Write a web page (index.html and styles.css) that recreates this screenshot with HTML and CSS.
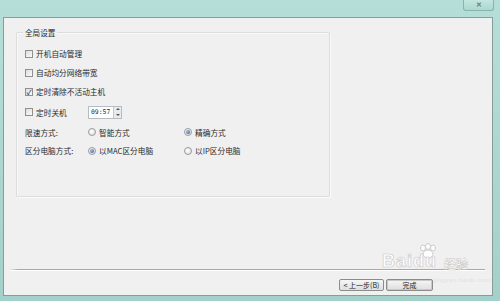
FILE: index.html
```html
<!DOCTYPE html>
<html lang="zh-CN">
<head>
    <meta charset="UTF-8">
    <title>全局设置</title>
    <link rel="stylesheet" href="styles.css">
</head>
<body>
    <div class="window">
        <div class="titlebar">
            <div class="close">&#x2715;</div>
        </div>
        <div class="panel">
            <div class="group">
                <div class="group-title">全局设置</div>
                <div class="rows">
                    <div class="row">
                        <label class="check"><span class="box"></span>开机自动管理</label>
                    </div>
                    <div class="row">
                        <label class="check"><span class="box"></span>自动均分网络带宽</label>
                    </div>
                    <div class="row">
                        <label class="check"><span class="box checked">&#x2713;</span>定时清除不活动主机</label>
                    </div>
                    <div class="row row-time">
                        <label class="check"><span class="box"></span>定时关机</label>
                        <div class="time">
                            <span class="time-text">09:57</span>
                            <span class="spin"><i class="up"></i><i class="down"></i></span>
                        </div>
                    </div>
                    <div class="row row-short">
                        <span class="label">限速方式:</span>
                        <label class="radio"><span class="dot"></span>智能方式</label>
                        <label class="radio"><span class="dot on"></span>精确方式</label>
                    </div>
                    <div class="row">
                        <span class="label">区分电脑方式:</span>
                        <label class="radio"><span class="dot on"></span>以MAC区分电脑</label>
                        <label class="radio"><span class="dot"></span>以IP区分电脑</label>
                    </div>
                </div>
            </div>
            <div class="spacer"></div>
            <div class="separator"></div>
            <div class="actions">
                <button class="btn btn-back">&lt; 上一步(B)</button>
                <button class="btn btn-done">完成</button>
            </div>
        </div>
    </div>
    <div class="watermark">
        <svg class="paw" width="26" height="16" viewBox="0 0 26 16">
            <ellipse cx="8" cy="5" rx="2.5" ry="3" fill="#fff" stroke="#c8c8c8"/>
            <ellipse cx="13" cy="3.5" rx="2.5" ry="3" fill="#fff" stroke="#c8c8c8"/>
            <ellipse cx="18" cy="5" rx="2.5" ry="3" fill="#fff" stroke="#c8c8c8"/>
            <ellipse cx="13" cy="11" rx="5" ry="4" fill="#fff" stroke="#c8c8c8"/>
        </svg>
        <span class="wm-text">Baidu</span><span class="wm-cn">经验</span>
        <div class="wm-url">jingyan.baidu.com</div>
    </div>
</body>
</html>
```

FILE: styles.css
```css
body {
    margin: 0;
    width: 500px;
    height: 301px;
    overflow: hidden;
    background: linear-gradient(to bottom, #b6ded8, #a3d1c9);
    font-family: "Noto Sans CJK SC", "Liberation Sans", sans-serif;
    color: #2a2a2a;
    position: relative;
}
.window {
    display: flex;
    flex-direction: column;
    height: 301px;
}
.titlebar {
    height: 17px;
    display: flex;
    justify-content: flex-end;
    padding-right: 6px;
}
.close {
    width: 29px;
    height: 10px;
    border: 1px solid #86b3ad;
    border-top: none;
    border-radius: 0 0 3px 3px;
    background: linear-gradient(to bottom, #c3e6e0, #acd8d0);
    color: #6f7f7d;
    font-size: 7px;
    line-height: 9px;
    text-align: center;
    font-weight: bold;
}
.panel {
    flex: 1;
    margin: 0 7px 5px 3px;
    border: 1px solid #8a9c99;
    background: #f0f0f0;
    display: flex;
    flex-direction: column;
}
.group {
    margin: 14px 0 0 12px;
    width: 312px;
    height: 163px;
    border: 1px solid #dcdcdc;
    box-shadow: inset 1px 1px 0 #fafafa, 1px 1px 0 #fafafa;
    border-radius: 2px;
}
.group-title {
    margin: -5px 0 0 6px;
    padding: 0 2px;
    width: fit-content;
    background: #f0f0f0;
    font-size: 7.6px;
    line-height: 10px;
}
.rows {
    padding: 6px 0 0 8px;
}
.row {
    height: 19px;
    display: grid;
    grid-template-columns: 63px 96px auto;
    align-items: center;
    font-size: 7.7px;
}
.row-time {
    height: 22px;
}
.row-short {
    height: 18px;
}
.check {
    display: flex;
    align-items: center;
    white-space: nowrap;
    grid-column: 1 / 4;
}
.row-time .check {
    grid-column: 1;
}
.box {
    width: 6px;
    height: 6px;
    border: 1px solid #8e8f8f;
    background: linear-gradient(135deg, #dcdcdc, #fbfbfb);
    margin-right: 3px;
    font-size: 7px;
    line-height: 6px;
    text-align: center;
    color: #2d4d7a;
    font-weight: bold;
    overflow: hidden;
}
.time {
    width: 32px;
    height: 11px;
    border: 1px solid #b5bcc4;
    background: #fff;
    display: flex;
    align-items: center;
    justify-content: space-between;
}
.time-text {
    font-family: "DejaVu Sans Mono", monospace;
    font-size: 6.4px;
    padding-left: 2px;
}
.spin {
    width: 7px;
    height: 11px;
    display: flex;
    flex-direction: column;
    border-left: 1px solid #c5c9cd;
    background: #e8eaec;
}
.spin i {
    flex: 1;
    display: flex;
    align-items: center;
    justify-content: center;
}
.spin i::after {
    content: "";
    border-left: 2px solid transparent;
    border-right: 2px solid transparent;
}
.spin .up::after {
    border-bottom: 2px solid #555;
}
.spin .down::after {
    border-top: 2px solid #555;
}
.label {
    white-space: nowrap;
}
.radio {
    display: flex;
    align-items: center;
    white-space: nowrap;
}
.dot {
    width: 6px;
    height: 6px;
    border: 1px solid #9a9a9a;
    border-radius: 50%;
    background: radial-gradient(circle at 40% 40%, #fff, #d8d8d8);
    margin-right: 3px;
    display: flex;
    align-items: center;
    justify-content: center;
}
.dot.on::after {
    content: "";
    width: 4px;
    height: 4px;
    border-radius: 50%;
    background: radial-gradient(circle at 35% 35%, #9fc3ea, #244f8a);
}
.spacer {
    flex: 1;
}
.separator {
    margin: 0 7px 0 6px;
    height: 1px;
    background: linear-gradient(to right, #e8e8e8, #a8a8a8 8px, #a8a8a8);
    border-bottom: 1px solid #fff;
}
.actions {
    display: flex;
    justify-content: flex-end;
    gap: 2px;
    padding: 8px 59px 4px 0;
}
.btn {
    height: 12px;
    padding: 0;
    border: 1px solid #8c8c8c;
    border-radius: 2px;
    background: linear-gradient(to bottom, #f6f6f6, #dedede);
    font-family: "Noto Sans CJK SC", "Liberation Sans", sans-serif;
    font-size: 7px;
    line-height: 10px;
    color: #222;
}
.btn-back {
    width: 45px;
}
.btn-done {
    width: 47px;
    box-shadow: inset 0 0 0 1px #c9c9c9;
}
.watermark {
    position: absolute;
    left: 382px;
    top: 243px;
    width: 110px;
    opacity: 0.9;
}
.paw {
    position: absolute;
    left: 33px;
    top: 0;
}
.wm-text {
    position: absolute;
    left: 0;
    top: 8px;
    font-family: "Liberation Sans", sans-serif;
    font-size: 18px;
    font-weight: bold;
    color: #fff;
    letter-spacing: 1px;
    -webkit-text-stroke: 0.6px #c4c4c4;
}
.wm-cn {
    position: absolute;
    left: 62px;
    top: 12px;
    font-size: 12px;
    font-weight: bold;
    color: #fff;
    -webkit-text-stroke: 0.5px #c4c4c4;
}
.wm-url {
    position: absolute;
    left: 52px;
    top: 34px;
    font-family: "Liberation Sans", sans-serif;
    font-size: 6px;
    color: #e0e0e0;
    letter-spacing: 0.5px;
}
```
